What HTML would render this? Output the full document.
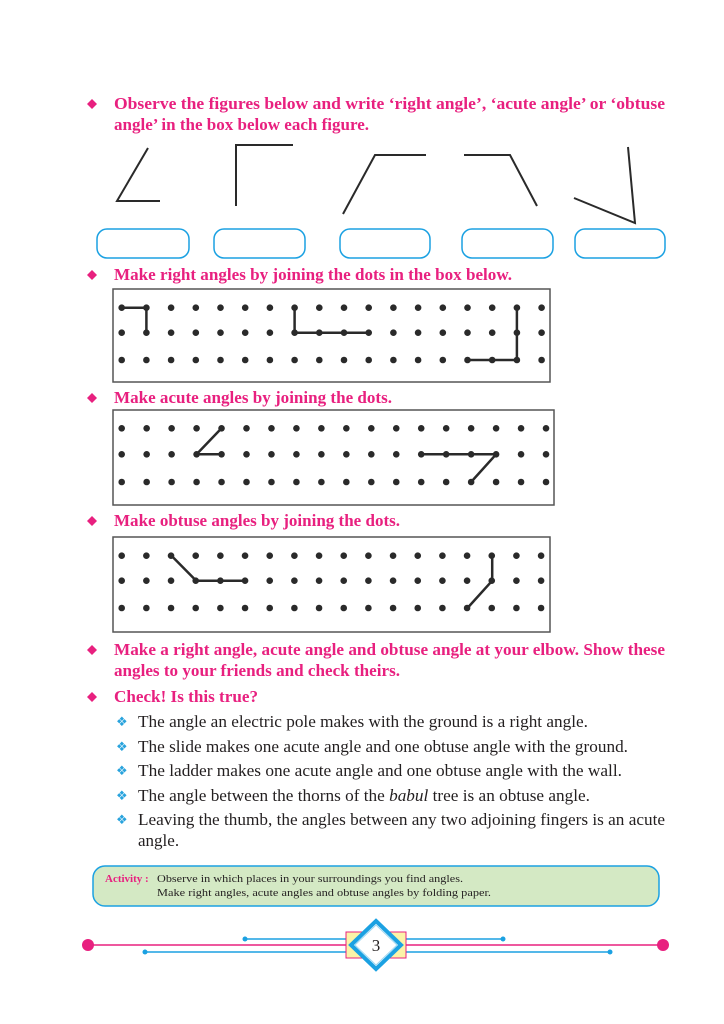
<!DOCTYPE html>
<html><head><meta charset="utf-8"><style>
html,body{margin:0;padding:0;background:#fff;}
svg{display:block;}
.h{font-family:"Liberation Serif",serif;font-weight:bold;font-size:16.5px;fill:#e8207f;}
.b{font-family:"Liberation Serif",serif;font-size:17px;fill:#231f20;}
.s{fill:#29a3dd;font-family:"DejaVu Sans",sans-serif;font-size:13px;}
.a{font-family:"Liberation Serif",serif;font-size:11px;fill:#231f20;}
</style></head><body>
<svg width="724" height="1024" viewBox="0 0 724 1024" xmlns="http://www.w3.org/2000/svg">
<defs><path id="dm" d="M0,-5 L5,0 L0,5 L-5,0Z" fill="#e8207f"/></defs>
<use href="#dm" x="92" y="104"/>
<text class="h" x="114" y="109" textLength="551" lengthAdjust="spacingAndGlyphs">Observe the figures below and write ‘right angle’, ‘acute angle’ or ‘obtuse</text>
<text class="h" x="114" y="130" textLength="255" lengthAdjust="spacingAndGlyphs">angle’ in the box below each figure.</text>
<g stroke="#2a2a2a" stroke-width="2" fill="none">
<polyline points="148,148 117,201 160,201"/>
<polyline points="236,206 236,145 293,145"/>
<polyline points="343,214 375,155 426,155"/>
<polyline points="464,155 510,155 537,206"/>
<polyline points="574,198 635,223 628,147"/>
</g>
<g stroke="#1ba1e2" stroke-width="1.5" fill="none">
<rect x="97" y="229" width="92" height="29" rx="10"/>
<rect x="214" y="229" width="91" height="29" rx="10"/>
<rect x="340" y="229" width="90" height="29" rx="10"/>
<rect x="462" y="229" width="91" height="29" rx="10"/>
<rect x="575" y="229" width="90" height="29" rx="10"/>
</g>
<use href="#dm" x="92" y="275"/>
<text class="h" x="114" y="280" textLength="398" lengthAdjust="spacingAndGlyphs">Make right angles by joining the dots in the box below.</text>
<use href="#dm" x="92" y="398"/>
<text class="h" x="114" y="403" textLength="278" lengthAdjust="spacingAndGlyphs">Make acute angles by joining the dots.</text>
<use href="#dm" x="92" y="521"/>
<text class="h" x="114" y="526" textLength="286" lengthAdjust="spacingAndGlyphs">Make obtuse angles by joining the dots.</text>
<use href="#dm" x="92" y="650"/>
<text class="h" x="114" y="655" textLength="551" lengthAdjust="spacingAndGlyphs">Make a right angle, acute angle and obtuse angle at your elbow. Show these</text>
<text class="h" x="114" y="676" textLength="286" lengthAdjust="spacingAndGlyphs">angles to your friends and check theirs.</text>
<use href="#dm" x="92" y="697"/>
<text class="h" x="114" y="702" textLength="144" lengthAdjust="spacingAndGlyphs">Check! Is this true?</text>
<text class="s" x="116" y="726">❖</text>
<text class="b" x="138" y="727" textLength="450" lengthAdjust="spacingAndGlyphs">The angle an electric pole makes with the ground is a right angle.</text>
<text class="s" x="116" y="751">❖</text>
<text class="b" x="138" y="752" textLength="490" lengthAdjust="spacingAndGlyphs">The slide makes one acute angle and one obtuse angle with the ground.</text>
<text class="s" x="116" y="775">❖</text>
<text class="b" x="138" y="776" textLength="484" lengthAdjust="spacingAndGlyphs">The ladder makes one acute angle and one obtuse angle with the wall.</text>
<text class="s" x="116" y="800">❖</text>
<text class="b" x="138" y="801" textLength="452" lengthAdjust="spacingAndGlyphs">The angle between the thorns of the <tspan font-style="italic">babul</tspan> tree is an obtuse angle.</text>
<text class="s" x="116" y="824">❖</text>
<text class="b" x="138" y="825" textLength="527" lengthAdjust="spacingAndGlyphs">Leaving the thumb, the angles between any two adjoining fingers is an acute</text>
<text class="b" x="138" y="846">angle.</text>
<g fill="none" stroke="#555" stroke-width="1.5">
<rect x="113" y="289" width="437" height="93"/>
<rect x="113" y="410" width="441" height="95"/>
<rect x="113" y="537" width="437" height="95"/>
</g>
<g id="dots"></g>
<g stroke="#2a2a2a" stroke-width="2.5" fill="none" stroke-linejoin="round">
<polyline points="121.7,307.7 146.4,307.7 146.4,332.7"/>
<polyline points="294.6,307.7 294.6,332.7 368.7,332.7"/>
<polyline points="516.9,307.7 516.9,360 467.5,360"/>
<polyline points="221.5,428.3 196.6,454.3 221.5,454.3"/>
<polyline points="421.2,454.3 496.1,454.3 471.1,482"/>
<polyline points="171.5,555.7 196.2,580.7 245.6,580.7"/>
<polyline points="492.2,555.7 492.2,580.7 467.5,608"/>
</g>
<rect x="93" y="866" width="566" height="40" rx="12" fill="#d4e9c4" stroke="#1ba1e2" stroke-width="1.5"/>
<text x="105" y="882" class="a" font-weight="bold" style="fill:#e8207f">Activity :</text>
<text x="157" y="882" class="a" textLength="306" lengthAdjust="spacingAndGlyphs">Observe in which places in your surroundings you find angles.</text>
<text x="157" y="896" class="a" textLength="334" lengthAdjust="spacingAndGlyphs">Make right angles, acute angles and obtuse angles by folding paper.</text>
<line x1="88" y1="945" x2="663" y2="945" stroke="#e8207f" stroke-width="1.5"/>
<circle cx="88" cy="945" r="6" fill="#e8207f"/>
<circle cx="663" cy="945" r="6" fill="#e8207f"/>
<line x1="245" y1="939" x2="503" y2="939" stroke="#1ba1e2" stroke-width="1.5"/>
<circle cx="245" cy="939" r="2.5" fill="#1ba1e2"/><circle cx="503" cy="939" r="2.5" fill="#1ba1e2"/>
<line x1="145" y1="952" x2="610" y2="952" stroke="#1ba1e2" stroke-width="1.5"/>
<circle cx="145" cy="952" r="2.5" fill="#1ba1e2"/><circle cx="610" cy="952" r="2.5" fill="#1ba1e2"/>
<rect x="346" y="932" width="60" height="26" fill="#fbf3a8" stroke="#e8207f" stroke-width="1"/>
<path d="M376,921 L401,945 L376,969 L351,945Z" fill="#fff" stroke="#1ba1e2" stroke-width="4"/>
<path d="M376,925 L397,945 L376,965 L355,945Z" fill="#fff" stroke="#9fd8f2" stroke-width="1"/>
<text x="376" y="951" text-anchor="middle" font-family="Liberation Serif,serif" font-size="17" fill="#231f20">3</text>
</svg>
<script>
(function(){
var g=document.getElementById('dots');var ns='http://www.w3.org/2000/svg';
var grids=[[121.7,24.7,[307.7,332.7,360]],[121.7,24.96,[428.3,454.3,482]],[121.7,24.67,[555.7,580.7,608]]];
grids.forEach(function(gr){for(var r=0;r<3;r++)for(var c=0;c<18;c++){var e=document.createElementNS(ns,'circle');e.setAttribute('cx',gr[0]+c*gr[1]);e.setAttribute('cy',gr[2][r]);e.setAttribute('r',3.3);e.setAttribute('fill','#2a2a2a');g.appendChild(e);}});
})();
</script>
</body></html>
